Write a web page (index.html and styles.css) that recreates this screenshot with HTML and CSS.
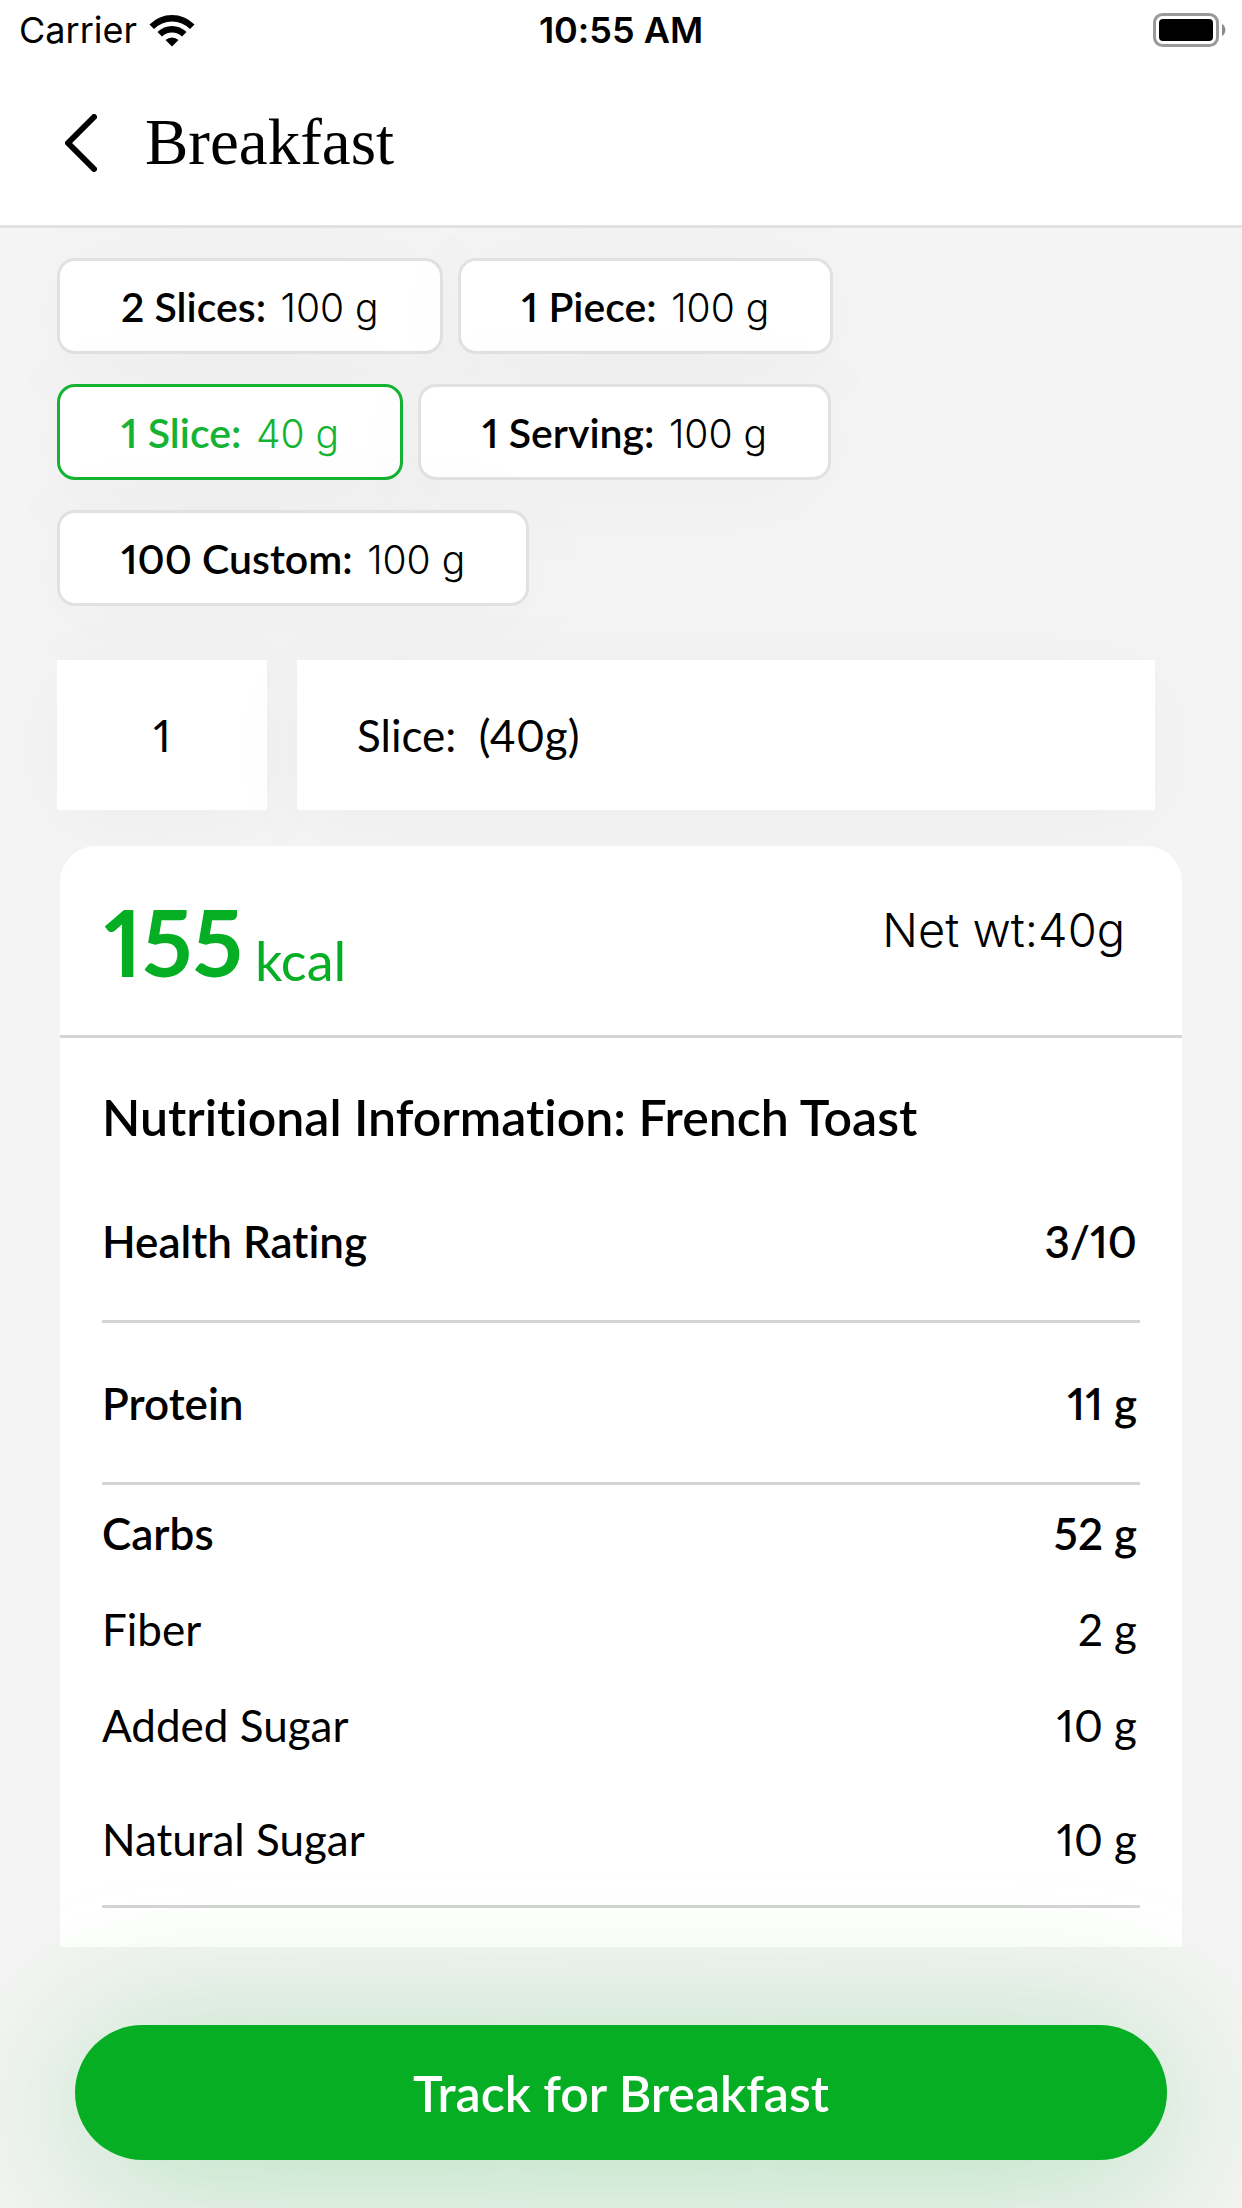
FILE: index.html
```html
<!DOCTYPE html>
<html lang="en">
<head>
    <meta charset="UTF-8">
    <meta name="viewport" content="width=device-width, initial-scale=1.0">
    <title>Breakfast</title>
    <link rel="stylesheet" href="styles.css">
</head>
<body>
    <header class="top">
        <div class="status-bar">
            <div class="carrier">
                <span>Carrier</span>
                <svg class="wifi" viewBox="0 0 46 33" aria-hidden="true">
                    <path d="M0.5 10.5 A31.5 31.5 0 0 1 45.5 10.5 L41 15 A25.5 25.5 0 0 0 5 15 Z"/>
                    <path d="M8.5 18 A20.5 20.5 0 0 1 37.5 18 L33 22.5 A14.5 14.5 0 0 0 13 22.5 Z"/>
                    <path d="M16.5 26 A9.5 9.5 0 0 1 29.5 26 L23 32.5 Z"/>
                </svg>
            </div>
            <time class="clock">10:55 AM</time>
            <svg class="battery" viewBox="0 0 74 34" aria-hidden="true">
                <rect x="1.5" y="1.5" width="63" height="31" rx="8" fill="none" stroke="#999" stroke-width="3"/>
                <rect x="6" y="6" width="54" height="22" rx="4"/>
                <path d="M69 11 A7 7 0 0 1 69 23 Z" fill="#8a8a8a"/>
            </svg>
        </div>
        <div class="nav">
            <button class="back" type="button" aria-label="Back">
                <svg viewBox="0 0 32 58" aria-hidden="true">
                    <path d="M29 3 L3 29 L29 55"/>
                </svg>
            </button>
            <h1>Breakfast</h1>
        </div>
    </header>

    <main>
        <div class="portion">
            <div class="chips">
                <button class="chip" type="button"><b>2 Slices:</b> <span>100 g</span></button>
                <button class="chip" type="button"><b>1 Piece:</b> <span>100 g</span></button>
                <button class="chip selected" type="button" aria-pressed="true"><b>1 Slice:</b> <span>40 g</span></button>
                <button class="chip" type="button"><b>1 Serving:</b> <span>100 g</span></button>
                <button class="chip" type="button"><b>100 Custom:</b> <span>100 g</span></button>
            </div>
            <div class="amount">
                <input class="quantity" type="text" inputmode="numeric" aria-label="Quantity" value="1">
                <input class="unit" type="text" aria-label="Unit" value="Slice:  (40g)" readonly>
            </div>
        </div>

        <section class="card">
            <div class="card-header">
                <p class="energy"><span class="kcal-value">155</span><span>kcal</span></p>
                <p class="weight">Net wt:40g</p>
            </div>
            <div class="card-body">
                <h2>Nutritional Information: French Toast</h2>
                <table>
                    <tbody>
                        <tr class="main-row"><th scope="row">Health Rating</th><td>3/10</td></tr>
                    </tbody>
                    <tbody>
                        <tr class="main-row"><th scope="row">Protein</th><td>11 g</td></tr>
                    </tbody>
                    <tbody>
                        <tr class="group-row"><th scope="row">Carbs</th><td>52 g</td></tr>
                        <tr><th scope="row">Fiber</th><td>2 g</td></tr>
                        <tr><th scope="row">Added Sugar</th><td>10 g</td></tr>
                        <tr class="last-row"><th scope="row">Natural Sugar</th><td>10 g</td></tr>
                    </tbody>
                </table>
            </div>
        </section>
    </main>

    <footer>
        <button class="track" type="button">Track for Breakfast</button>
    </footer>
</body>
</html>
```
FILE: styles.css
```css
* {
    box-sizing: border-box;
    margin: 0;
}
body {
    min-height: 100vh;
    display: flex;
    flex-direction: column;
    background-color: #f4f4f4;
    color: #000;
    font-family: "Lato", sans-serif;
    font-size: 44px;
    font-variant-ligatures: none;
    font-variant-numeric: proportional-nums;
    overflow-x: hidden;
}
button, input {
    font: inherit;
    font-variant-numeric: inherit;
    color: inherit;
    border: none;
    border-radius: 0;
}
button {
    cursor: pointer;
}

/* status bar and title */
.top {
    position: relative;
    z-index: 1;
    background-color: #fff;
    border-bottom: 3px solid #e1e3e2;
}
.status-bar {
    display: grid;
    grid-template-columns: 1fr auto 1fr;
    align-items: center;
    height: 60px;
    padding: 0 15px;
    font-family: "Inter", sans-serif;
    font-size: 36px;
}
.carrier {
    display: flex;
    align-items: center;
    gap: 12px;
    padding-left: 4px;
}
.wifi {
    width: 46px;
    height: 33px;
}
.clock {
    font-weight: 600;
}
.battery {
    width: 74px;
    height: 34px;
    justify-self: end;
}
.nav {
    display: flex;
    align-items: center;
    gap: 48px;
    height: 165px;
    padding: 0 65px;
}
.back {
    display: flex;
    padding: 0;
    background: none;
}
.back svg {
    width: 32px;
    height: 58px;
    fill: none;
    stroke: #000;
    stroke-width: 6;
    stroke-linecap: round;
    stroke-linejoin: round;
}
h1 {
    font-family: "Liberation Serif", serif;
    font-size: 65px;
    font-weight: normal;
}

/* serving size */
main {
    flex: 1;
}
.portion {
    padding: 30px 87px 36px 57px;
}
.chips {
    display: flex;
    flex-wrap: wrap;
    gap: 30px 15px;
}
.chip {
    height: 96px;
    padding: 0 61px;
    background-color: #fff;
    border: 3px solid #e1e1e1;
    border-radius: 18px;
    box-shadow: 0 12px 120px rgba(0, 0, 0, 0.03);
    font-size: 41px;
}
.chip b {
    font-weight: 600;
}
.chip span {
    margin-left: 4px;
    font-family: "Inter", sans-serif;
    font-size: 39px;
    font-weight: 300;
}
.chip.selected {
    border-color: #14b333;
    color: #14b333;
}
.amount {
    display: flex;
    gap: 30px;
    margin-top: 54px;
}
.amount input {
    height: 150px;
    background-color: #fff;
    box-shadow: 0 12px 100px rgba(0, 0, 0, 0.03);
}
.quantity {
    width: 210px;
    text-align: center;
}
.unit {
    flex: 1;
    padding: 0 60px;
}

/* nutrition card */
.card {
    position: relative;
    margin: 0 60px;
    background-color: #fff;
    border-radius: 36px 36px 0 0;
}
.card-header {
    display: flex;
    justify-content: space-between;
    align-items: flex-start;
    padding: 50px 57px 47px 44px;
    border-bottom: 3px solid #d4d4d4;
    font-size: 54px;
    line-height: 54px;
}
.energy {
    display: flex;
    align-items: flex-end;
    gap: 12px;
    color: #05ae23;
}
.kcal-value {
    font-size: 92px;
    font-weight: 700;
    line-height: 92px;
}
.weight {
    padding-top: 7px;
    font-family: "Inter", sans-serif;
    font-size: 47px;
    font-weight: 300;
}
.card-body {
    padding: 44px 42px 39px;
}
h2 {
    padding-bottom: 9px;
    font-size: 50px;
    font-weight: 600;
    line-height: 70px;
}
table {
    width: 100%;
    border-collapse: separate;
    border-spacing: 0;
}
th, td {
    height: 96px;
    padding: 0;
    font-weight: 400;
    text-align: left;
}
td {
    padding-right: 3px;
    text-align: right;
}
.main-row th, .main-row td {
    height: 162px;
    font-weight: 600;
}
.group-row th, .group-row td {
    font-weight: 600;
}
.last-row th, .last-row td {
    height: 135px;
}
tbody tr:last-child th, tbody tr:last-child td {
    border-bottom: 3px solid #d4d4d4;
}

/* bottom action, its glow falls over the card */
footer {
    position: relative;
    padding: 78px 75px 48px;
}
.track {
    display: block;
    width: 100%;
    height: 135px;
    border-radius: 68px;
    background-color: #05ae23;
    box-shadow: 0 15px 160px rgba(5, 174, 35, 0.3);
    color: #fff;
    font-size: 50px;
    font-weight: 600;
}
```
